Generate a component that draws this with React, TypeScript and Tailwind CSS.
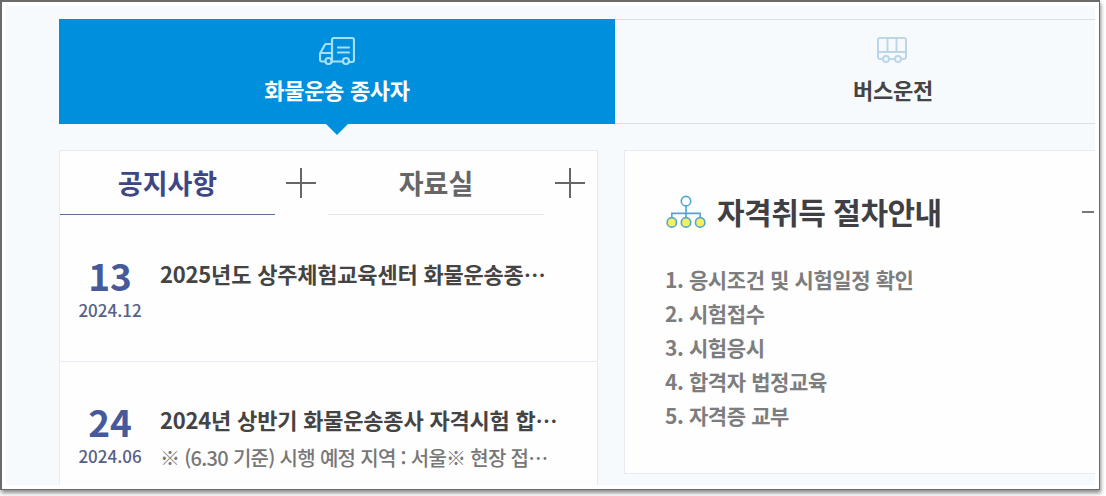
import React from "react";

const fontStack = "[font-family:'Noto_Sans_CJK_KR','Noto_Sans',sans-serif]";

const TruckIcon = () => (
  <svg width="36" height="28" viewBox="0 0 36 28" fill="none" stroke="#a5e0f7" strokeWidth="2.200" strokeLinecap="round" strokeLinejoin="round">
    <path d="M13 6.500V3a2 2 0 0 1 2-2h18a2 2 0 0 1 2 2v20a2 2 0 0 1-2 2h-2" />
    <path d="M23 24.500h-10M6 24.500H3a2 2 0 0 1-2-2v-6l4.500-8a2 2 0 0 1 2-1.500H13v18" />
    <path d="M2 16h11M19 10.500h11M19 15.500h11" />
    <circle cx="9.500" cy="24" r="3" />
    <circle cx="27" cy="24" r="3" />
  </svg>
);

const BusIcon = () => (
  <svg className="mr-[2px]" width="30" height="26" viewBox="0 0 30 26" fill="none" stroke="#bcd6e8" strokeWidth="2" strokeLinecap="round" strokeLinejoin="round">
    <path d="M5.500 22H3a2 2 0 0 1-2-2V3a2 2 0 0 1 2-2h24a2 2 0 0 1 2 2v17a2 2 0 0 1-2 2h-2" />
    <path d="M1 15h28M10.500 1v14M19.500 1v14M13 22h4" />
    <circle cx="9" cy="22" r="3" />
    <circle cx="21" cy="22" r="3" />
  </svg>
);

const TreeIcon = () => (
  <svg width="42" height="34" viewBox="0 0 44 36" fill="none">
    <g stroke="#4fa6cf" strokeWidth="1.700">
      <circle cx="22" cy="6.500" r="5" fill="#fff" />
      <path d="M22 11.500V27M7 28v-8.500h30V28" />
      <circle cx="7" cy="29" r="5" fill="#f4f060" />
      <circle cx="22" cy="29" r="5" fill="#f4f060" />
      <circle cx="37" cy="29" r="5" fill="#f4f060" />
    </g>
  </svg>
);

const PlusIcon = () => (
  <svg width="32" height="32" viewBox="0 0 32 32" stroke="#666" strokeWidth="2">
    <path d="M1 16h30M16 1v30" />
  </svg>
);

const notices = [
  { day: "13", month: "2024.12", title: "2025년도 상주체험교육센터 화물운송종사자 자격시험 안내", desc: "" },
  { day: "24", month: "2024.06", title: "2024년 상반기 화물운송종사 자격시험 합격자 발표 안내", desc: "※ (6.30 기준) 시행 예정 지역 : 서울※ 현장 접수 안내 사항" },
];

const steps = ["1. 응시조건 및 시험일정 확인", "2. 시험접수", "3. 시험응시", "4. 합격자 법정교육", "5. 자격증 교부"];

export default function App() {
  return (
    <div lang="ko" className={`w-[1106px] h-[496px] bg-white overflow-hidden ${fontStack}`}>
      <div className="w-[1100px] h-[490px] bg-white border border-[#6b6b6b] border-t-2 border-l-2 pt-[4px] pl-[4px] pr-[4px] pb-[4px] shadow-[1px_3px_4px_rgba(0,0,0,0.45)]">
        <div className="h-full bg-[#f7fafd] pl-[53px] pt-[13px] overflow-hidden">
          {/* top tabs */}
          <div className="flex w-[1112px] h-[105px]">
            <div className="relative w-[556px] shrink-0 bg-[#008fdc] flex flex-col items-center pt-[18px]">
              <TruckIcon />
              <div className="mt-[8px] text-[22px] leading-[32px] font-bold text-white tracking-[-0.3px]">화물운송 종사자</div>
              <div className="absolute left-1/2 top-full ml-[-11px] w-0 h-0 border-x-[11px] border-x-transparent border-t-[11px] border-t-[#008fdc]" />
            </div>
            <div className="flex-1 border-y border-[#dcdfe3] flex flex-col items-center pt-[17px]">
              <BusIcon />
              <div className="mt-[10px] text-[22px] leading-[32px] font-bold text-[#444] tracking-[-0.3px]">버스운전</div>
            </div>
          </div>

          <div className="flex mt-[26px] gap-[26px] w-[1100px]">
            {/* notice board */}
            <div className="w-[539px] shrink-0 h-[340px] bg-[#fefefe] border border-[#e8ecf2] border-b-0">
              <div className="flex h-[64px]">
                <div className="w-[215px] border-b border-[#5b7393] text-center text-[27px] leading-[64px] font-bold text-[#3d4785]">공지사항</div>
                <div className="w-[53px] flex pl-[10px] pt-[16px]"><PlusIcon /></div>
                <div className="w-[216px] border-b border-[#e4e6ea] text-center text-[27px] leading-[64px] font-bold text-[#666]">자료실</div>
                <div className="flex pl-[10px] pt-[16px]"><PlusIcon /></div>
              </div>
              {notices.map((n, i) => (
                <div key={n.day} className={`flex h-[147px] ${i === 0 ? "border-b border-[#e8ecf2] pt-[37px]" : "pt-[36px]"}`}>
                  <div className="w-[100px] text-center shrink-0">
                    <div className="text-[37px] leading-[46px] font-bold text-[#46599b]">{n.day}</div>
                    <div className="text-[17px] leading-[24px] font-medium text-[#56608a]">{n.month}</div>
                  </div>
                  <div className="w-[400px] pt-[4px]">
                    <div className="truncate text-[22px] leading-[34px] font-bold text-[#444] tracking-[-0.2px]">{n.title}</div>
                    {n.desc && <div className="truncate text-[20px] leading-[30px] mt-[7px] font-medium text-[#777] tracking-[-0.7px]">{n.desc}</div>}
                  </div>
                </div>
              ))}
            </div>

            {/* procedure guide */}
            <div className="flex-1 h-[324px] bg-[#fefefe] border border-[#e8ecf2] pl-[40px] pt-[36px] relative">
              <div className="flex items-center gap-[10px] h-[50px]">
                <TreeIcon />
                <div className="text-[30px] leading-[48px] pb-[2px] font-bold text-[#3f3f44] tracking-[-0.5px]">자격취득 절차안내</div>
              </div>
              <div className="absolute left-[457px] top-[60px] w-[12px] h-[2px] bg-[#777]" />
              <ul className="mt-[25px]">
                {steps.map((s) => (
                  <li key={s} className="text-[21px] leading-[34px] font-bold text-[#7d7d7d] tracking-[-0.4px]">{s}</li>
                ))}
              </ul>
            </div>
          </div>
        </div>
      </div>
    </div>
  );
}
